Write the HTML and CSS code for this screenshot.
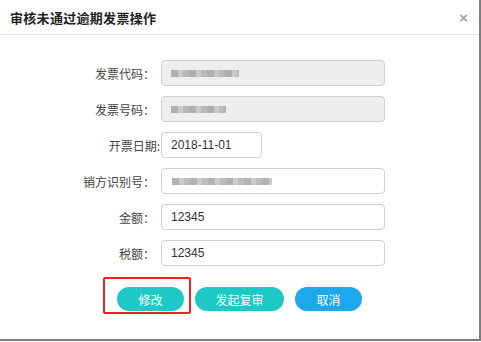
FILE: index.html
```html
<!DOCTYPE html>
<html lang="zh-CN">
<head>
  <meta charset="UTF-8" />
  <meta name="viewport" content="width=device-width, initial-scale=1.0" />
  <title>审核未通过逾期发票操作</title>
  <link rel="stylesheet" href="styles.css">
</head>
<body>
  <div class="modal">
    <div class="modal-header">
      <h4 class="modal-title">审核未通过逾期发票操作</h4>
      <span class="close">×</span>
    </div>

    <div class="modal-body">
      <div class="form-row">
        <label class="label">发票代码：</label>
        <div class="field readonly"><span class="masked m1"></span></div>
      </div>
      <div class="form-row">
        <label class="label">发票号码：</label>
        <div class="field readonly"><span class="masked m2"></span></div>
      </div>
      <div class="form-row">
        <label class="label tight">开票日期:</label>
        <div class="field short">2018-11-01</div>
      </div>
      <div class="form-row">
        <label class="label">销方识别号：</label>
        <div class="field"><span class="masked m3"></span></div>
      </div>
      <div class="form-row">
        <label class="label">金额：</label>
        <div class="field">12345</div>
      </div>
      <div class="form-row">
        <label class="label">税额：</label>
        <div class="field">12345</div>
      </div>

      <div class="actions">
        <div class="marked">
          <button class="btn btn-teal">修改</button>
          <span class="mark"></span>
        </div>
        <button class="btn btn-teal wide">发起复审</button>
        <button class="btn btn-blue">取消</button>
      </div>
    </div>
  </div>
</body>
</html>
```

FILE: styles.css
```css
body {
  margin: 0;
  background-color: #fff;
  font-family: "Noto Sans CJK SC", "Liberation Sans", sans-serif;
  color: #333;
}
.modal {
  width: 479px;
  height: 339px;
  border-right: 2px solid #7d7d7d;
  border-bottom: 2px solid #7d7d7d;
  background-color: #fff;
}
.modal-header {
  height: 35px;
  display: flex;
  align-items: center;
  justify-content: space-between;
  padding: 0 11px 0 10px;
  border-bottom: 1px solid #e2e2e2;
  box-sizing: border-box;
}
.modal-title {
  margin: 0;
  font-size: 13px;
  font-weight: bold;
  color: #222;
  letter-spacing: 0.3px;
}
.close {
  font-family: "Liberation Sans", sans-serif;
  font-size: 15px;
  font-weight: bold;
  color: #a3a3a3;
  line-height: 1;
}
.modal-body {
  padding-top: 25px;
  display: flex;
  flex-direction: column;
  gap: 10px;
}
.form-row {
  display: flex;
  align-items: center;
  gap: 6px;
  height: 26px;
}
.label {
  width: 155px;
  text-align: right;
  font-size: 12px;
  color: #444;
}
.label.tight {
  width: 161px;
  margin-right: -6px;
  padding-right: 1px;
  box-sizing: border-box;
}
.field {
  width: 224px;
  height: 26px;
  box-sizing: border-box;
  border: 1px solid #cfcfcf;
  border-radius: 4px;
  padding-left: 9px;
  display: flex;
  align-items: center;
  font-family: "Liberation Sans", sans-serif;
  font-size: 12px;
  color: #333;
  background-color: #fff;
}
.field.readonly {
  background-color: #eee;
}
.field.short {
  width: 101px;
}
.masked {
  height: 7px;
  background: repeating-linear-gradient(90deg, #a0a0a0 0 7px, #c0c0c0 7px 12px, #acacac 12px 18px);
  filter: blur(0.7px);
  opacity: 0.8;
}
.m1 { width: 68px; }
.m2 { width: 55px; }
.m3 { width: 100px; margin-left: 1px; }
.actions {
  display: flex;
  align-items: center;
  gap: 11px;
  padding-left: 117px;
  margin-top: 11px;
}
.marked {
  position: relative;
  display: flex;
}
.mark {
  position: absolute;
  left: -14px;
  top: -10px;
  width: 88px;
  height: 37px;
  border: 2px solid #ee2222;
  border-radius: 2px;
  box-sizing: border-box;
}
.btn {
  width: 67px;
  height: 24px;
  border: none;
  border-radius: 12px;
  color: #fff;
  font-family: "Noto Sans CJK SC", sans-serif;
  font-size: 12px;
  padding: 0;
  cursor: pointer;
}
.btn.wide {
  width: 89px;
}
.btn-teal {
  background-color: #1dc8c6;
}
.btn-blue {
  background-color: #1ca8ea;
}
```
